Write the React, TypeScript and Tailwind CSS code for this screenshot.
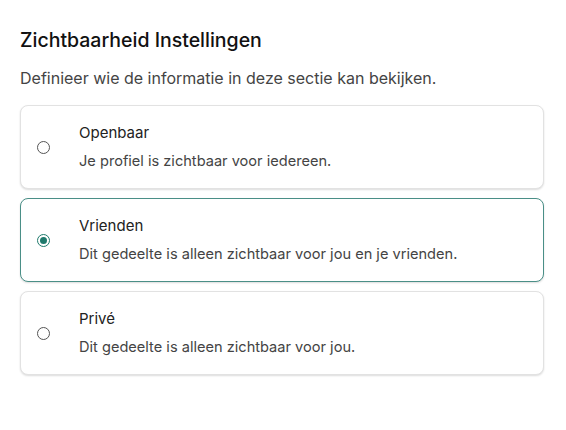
import React, { useState } from "react";

const options = [
  { id: "public", label: "Openbaar", desc: "Je profiel is zichtbaar voor iedereen." },
  { id: "friends", label: "Vrienden", desc: "Dit gedeelte is alleen zichtbaar voor jou en je vrienden." },
  { id: "private", label: "Privé", desc: "Dit gedeelte is alleen zichtbaar voor jou." },
];

export default function App() {
  const [sel, setSel] = useState("friends");
  return (
    <div className="min-h-screen bg-white pl-5 pr-[22px] pt-[26px]" style={{ fontFamily: "Inter, 'Noto Sans', sans-serif" }}>
      <h2 className="text-[19.5px] leading-7 font-medium text-[#111]">Zichtbaarheid Instellingen</h2>
      <p className="mt-[12px] text-[16px] leading-6 text-[#444]">Definieer wie de informatie in deze sectie kan bekijken.</p>
      <div className="mt-[15px] flex flex-col gap-[9px]">
        {options.map((o) => {
          const active = sel === o.id;
          return (
            <label
              key={o.id}
              onClick={() => setSel(o.id)}
              className={
                "flex items-center rounded-lg border bg-white px-4 h-[84px] shadow-[0_1px_2px_rgba(0,0,0,0.14)] cursor-pointer " +
                (active ? "border-[#4a8f87]" : "border-[#e2e2e2]")
              }
            >
              <span className="w-[42px] shrink-0 flex items-center">
                {active ? (
                  <span className="w-[13px] h-[13px] rounded-full border-[1.5px] border-[#1f7a6c] flex items-center justify-center">
                    <span className="w-[7px] h-[7px] rounded-full bg-[#1f7a6c]" />
                  </span>
                ) : (
                  <span className="w-[13px] h-[13px] rounded-full border-[1.5px] border-[#555]" />
                )}
              </span>
              <span className="flex flex-col">
                <span className="text-[15px] leading-6 font-normal text-[#222]">{o.label}</span>
                <span className="mt-[4px] text-[14.6px] leading-6 text-[#444]">{o.desc}</span>
              </span>
            </label>
          );
        })}
      </div>
    </div>
  );
}
